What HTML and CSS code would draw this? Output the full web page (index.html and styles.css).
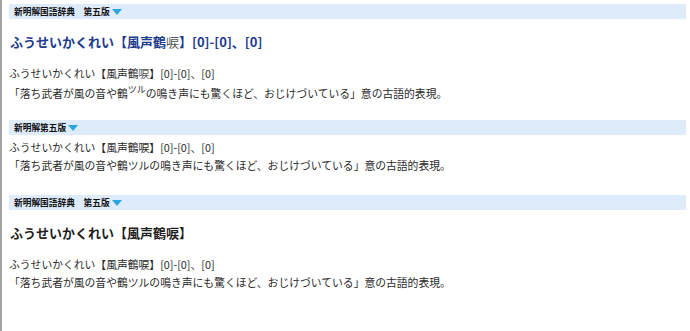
FILE: index.html
```html
<!DOCTYPE html>
<html lang="ja">
  <head>
    <meta charset="UTF-8" />
    <meta name="viewport" content="width=device-width, initial-scale=1.0" />
    <title>風声鶴唳</title>
    <link rel="stylesheet" href="styles.css">
  </head>
  <body>
    <div class="page">
      <div class="entry entry-first">
        <div class="dict-bar">
          <span>新明解国語辞典　第五版</span>
          <span class="arrow"></span>
        </div>
        <h2 class="headword link">ふうせいかくれい【風声鶴<span class="fallback">唳</span>】[0]-[0]、[0]</h2>
        <div class="body">
          <p>ふうせいかくれい【風声鶴<span class="fallback">唳</span>】[0]-[0]、[0]</p>
          <p class="with-ruby">「落ち武者が風の音や鶴<sup>ツル</sup>の鳴き声にも驚くほど、おじけづいている」意の古語的表現。</p>
        </div>
      </div>

      <div class="entry entry-second">
        <div class="dict-bar">
          <span>新明解第五版</span>
          <span class="arrow"></span>
        </div>
        <div class="body">
          <p>ふうせいかくれい【風声鶴唳】[0]-[0]、[0]</p>
          <p>「落ち武者が風の音や鶴ツルの鳴き声にも驚くほど、おじけづいている」意の古語的表現。</p>
        </div>
      </div>

      <div class="entry entry-third">
        <div class="dict-bar">
          <span>新明解国語辞典　第五版</span>
          <span class="arrow"></span>
        </div>
        <h2 class="headword">ふうせいかくれい【風声鶴唳】</h2>
        <div class="body">
          <p>ふうせいかくれい【風声鶴唳】[0]-[0]、[0]</p>
          <p>「落ち武者が風の音や鶴ツルの鳴き声にも驚くほど、おじけづいている」意の古語的表現。</p>
        </div>
      </div>
    </div>
  </body>
</html>
```

FILE: styles.css
```css
* {
  margin: 0;
  padding: 0;
  box-sizing: border-box;
}
html,
body {
  height: 100%;
}
body {
  background: white;
  font-family: "Noto Sans CJK JP", "Noto Sans", sans-serif;
  color: #222;
}
.page {
  min-height: 100%;
  border-left: 2px solid #a3a3a3;
  padding: 4px 4px 0 7px;
}
.dict-bar {
  display: flex;
  align-items: center;
  gap: 2px;
  height: 15px;
  padding-left: 5px;
  background-color: #ddebfb;
  font-size: 8.7px;
  font-weight: bold;
  color: #111;
}
.arrow {
  width: 0;
  height: 0;
  border-left: 5px solid transparent;
  border-right: 5px solid transparent;
  border-top: 6px solid #2aa6df;
  margin-top: 1px;
}
.headword {
  font-size: 13px;
  font-weight: bold;
  line-height: 20px;
  color: #1e1e1e;
  padding-left: 1px;
}
.headword.link {
  color: #1c3b8e;
}
.fallback {
  font-weight: normal;
  color: #555;
}
.body {
  font-size: 10.8px;
  line-height: 18px;
  color: #2a2a2a;
}
.body p {
  height: 18px;
}
.body .with-ruby {
  margin-top: 2px;
}
sup {
  font-size: 9px;
  line-height: 0;
  vertical-align: 5px;
}
.entry-first .headword {
  margin-top: 13px;
}
.entry-first .body {
  margin-top: 12px;
}
.entry-second {
  margin-top: 18px;
}
.entry-second .body {
  margin-top: 3px;
}
.entry-third {
  margin-top: 21px;
}
.entry-third .headword {
  margin-top: 13px;
}
.entry-third .body {
  margin-top: 12px;
}
```
